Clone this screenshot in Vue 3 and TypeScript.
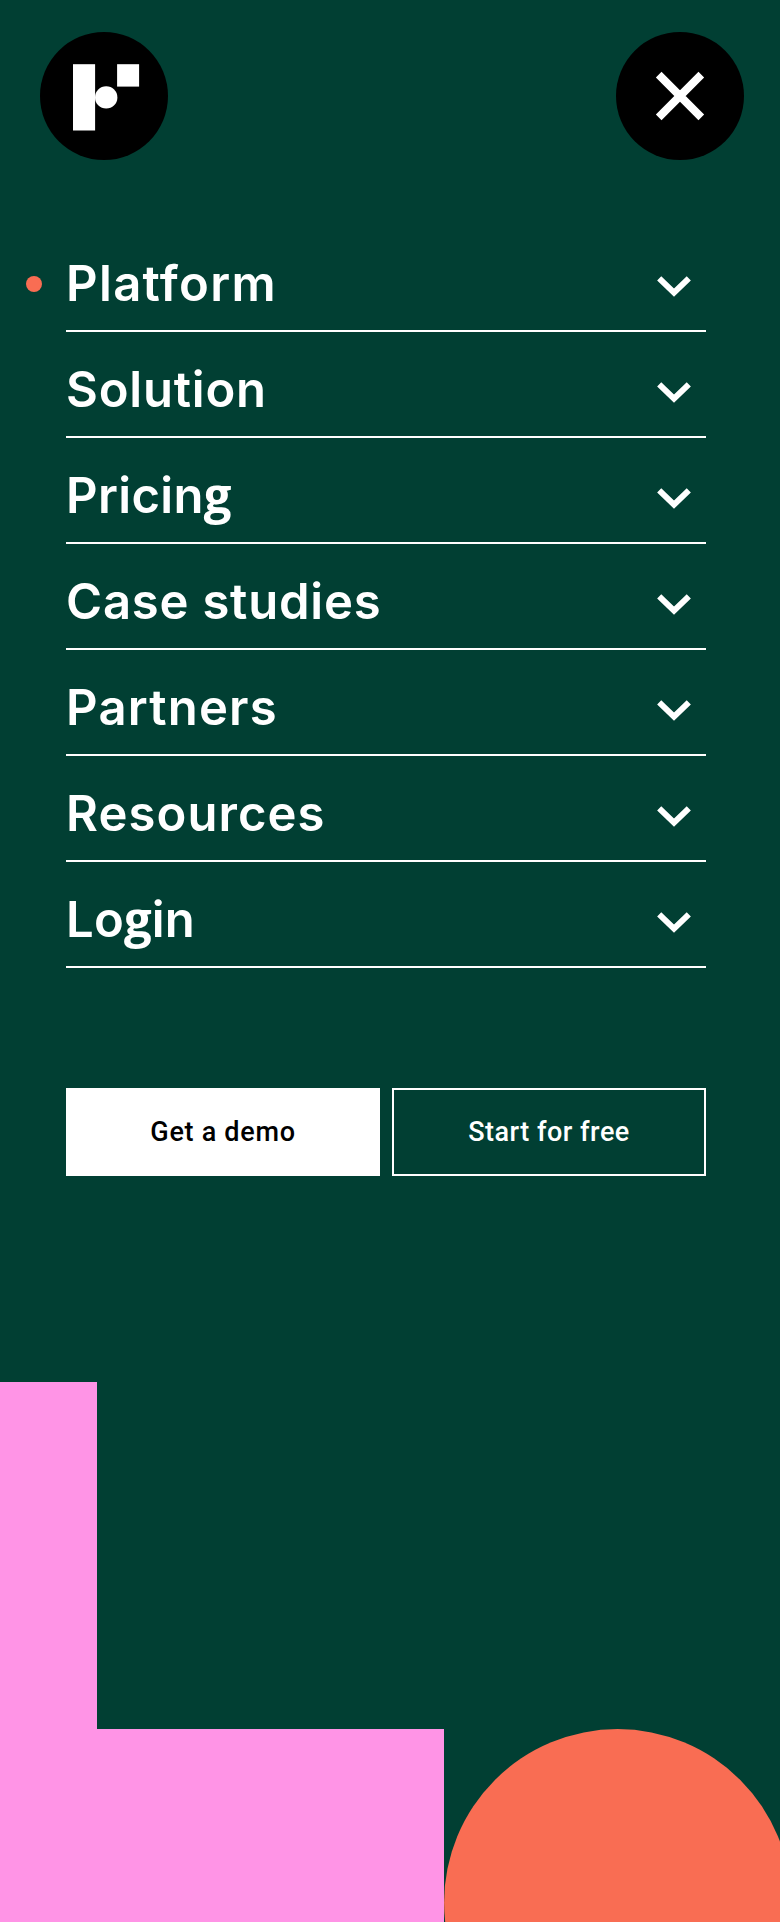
<script setup lang="ts">
interface MenuItem {
  label: string
  spacing: number
  active?: boolean
}

const items: MenuItem[] = [
  { label: 'Platform', spacing: 1.35, active: true },
  { label: 'Solution', spacing: 0.8 },
  { label: 'Pricing', spacing: 0.35 },
  { label: 'Case studies', spacing: 0.78 },
  { label: 'Partners', spacing: 1.2 },
  { label: 'Resources', spacing: 1.08 },
  { label: 'Login', spacing: 0.2 },
]

// The headings use a double-storey g, so that letter is set in its own family.
const pieces = (label: string): string[] => label.split(/(g)/).filter(Boolean)
</script>

<template>
  <main class="page">
    <header class="top">
      <a class="round" aria-label="Home">
        <svg width="128" height="128" viewBox="0 0 128 128" fill="#fff">
          <rect x="33" y="32.2" width="22.1" height="66.3" />
          <circle cx="66.2" cy="65.4" r="11.2" />
          <rect x="77.1" y="32.2" width="22" height="22.4" />
        </svg>
      </a>
      <button class="round" type="button" aria-label="Close">
        <svg width="128" height="128" viewBox="0 0 128 128" fill="none" stroke="#fff" stroke-width="8">
          <path d="M42.7 42.6 85.3 85.4M85.3 42.6 42.7 85.4" />
        </svg>
      </button>
    </header>

    <nav class="menu">
      <a v-for="item in items" :key="item.label" class="item" :class="{ active: item.active }">
        <span class="label" :style="{ letterSpacing: item.spacing + 'px' }"><span v-for="(piece, i) in pieces(item.label)" :key="i" :class="{ loop: piece === 'g' }">{{ piece }}</span></span>
        <svg class="chevron" width="36" height="24" viewBox="0 0 36 24" fill="none" stroke="#fff" stroke-width="5.9">
          <path d="M3.2 4.3 18 18.7 32.8 4.3" />
        </svg>
      </a>
    </nav>

    <div class="actions">
      <button class="btn solid" type="button">Get a demo</button>
      <button class="btn outline" type="button">Start for free</button>
    </div>

    <svg class="shapes" width="780" height="540" viewBox="0 0 780 540">
      <path d="M0 0H97V347H444V540H0Z" fill="#ff94e6" />
      <circle cx="617.6" cy="520.6" r="173.5" fill="#f96d53" />
    </svg>
  </main>
</template>

<style>
body {
  margin: 0;
  background: #013f33;
}
</style>

<style scoped>
.page {
  width: 780px;
  height: 1922px;
  overflow: hidden;
  display: flex;
  flex-direction: column;
  background: #013f33;
  color: #fff;
  font-family: Inter, "Liberation Sans", sans-serif;
}
.top {
  display: flex;
  justify-content: space-between;
  padding: 32px 36px 0 40px;
}
.round {
  width: 128px;
  height: 128px;
  padding: 0;
  border: 0;
  border-radius: 50%;
  background: #000;
}
.round svg {
  display: block;
}
.menu {
  margin: 66px 74px 0 66px;
}
.item {
  position: relative;
  box-sizing: border-box;
  height: 106px;
  padding-right: 14px;
  display: flex;
  align-items: center;
  justify-content: space-between;
  border-bottom: 2px solid #fff;
}
.item.active::before {
  content: "";
  position: absolute;
  left: -40px;
  top: 50px;
  width: 16px;
  height: 16px;
  border-radius: 50%;
  background: #f96d53;
}
.label {
  padding-top: 12px;
  height: 60px;
  font-size: 49px;
  line-height: 60px;
  font-weight: 600;
  white-space: nowrap;
}
.loop {
  font-family: "Open Sans", Inter, sans-serif;
  font-weight: 700;
  line-height: 0;
}
.chevron {
  margin-top: 16px;
}
.actions {
  display: grid;
  grid-template-columns: 1fr 1fr;
  gap: 12px;
  margin: 120px 74px 0 66px;
}
.btn {
  height: 88px;
  padding: 0;
  border: 2px solid #fff;
  border-radius: 0;
  font: 500 27px/32px Roboto, "Liberation Sans", sans-serif;
}
.solid {
  background: #fff;
  color: #000;
  letter-spacing: 0.7px;
}
.outline {
  background: transparent;
  color: #fff;
  letter-spacing: 0.5px;
}
.shapes {
  display: block;
  flex: none;
  margin-top: auto;
}
</style>
